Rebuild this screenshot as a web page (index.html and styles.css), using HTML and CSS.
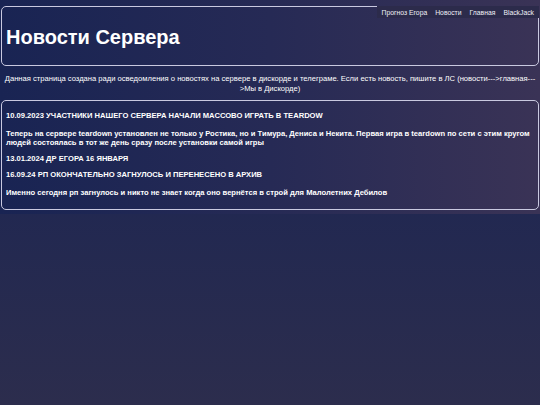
FILE: index.html
```html
<!DOCTYPE html>
<html lang="ru">
<head>
<meta charset="utf-8">
<title>Новости Сервера</title>
<link rel="stylesheet" href="styles.css">
</head>
<body>
<div class="wrap">
  <header class="header">
    <nav class="nav">
      <a href="#">Прогноз Егора</a>
      <a href="#">Новости</a>
      <a href="#">Главная</a>
      <a href="#">BlackJack</a>
    </nav>
    <h1 class="title">Новости Сервера</h1>
  </header>
  <p class="intro">Данная страница создана ради осведомления о новостях на сервере в дискорде и телеграме. Если есть новость, пишите в ЛС (новости---&gt;главная---&gt;Мы в Дискорде)</p>
  <section class="news">
    <h2 class="news-title">10.09.2023 УЧАСТНИКИ НАШЕГО СЕРВЕРА НАЧАЛИ МАССОВО ИГРАТЬ В TEARDOW</h2>
    <p class="news-text">Теперь на сервере teardown установлен не только у Ростика, но и Тимура, Дениса и Некита. Первая игра в teardown по сети с этим кругом людей состоялась в тот же день сразу после установки самой игры</p>
    <h2 class="news-title">13.01.2024 ДР ЕГОРА 16 ЯНВАРЯ</h2>
    <h2 class="news-title">16.09.24 РП ОКОНЧАТЕЛЬНО ЗАГНУЛОСЬ И ПЕРЕНЕСЕНО В АРХИВ</h2>
    <p class="news-text">Именно сегодня рп загнулось и никто не знает когда оно вернётся в строй для Малолетних Дебилов</p>
  </section>
</div>
</body>
</html>
```
FILE: styles.css
```css
html, body {
  margin: 0;
  padding: 0;
}
body {
  min-height: 405px;
  background: linear-gradient(180deg, #172251 0%, #1f2752 40%, #2c2d4d 100%);
  font-family: "Liberation Sans", Arial, sans-serif;
  color: #ffffff;
}
.wrap {
  background: linear-gradient(90deg, #192453 0%, #262a55 50%, #3a3356 100%);
  padding: 6px 1px 4px 1px;
}
.header {
  position: relative;
  height: 60px;
  border: 1px solid #c9c9e0;
  border-radius: 5px;
  box-sizing: border-box;
}
.nav {
  position: absolute;
  top: -1px;
  right: -1px;
  height: 12px;
  background: #2c2b4b;
  display: flex;
  padding: 0 1px 0 1px;
  align-items: center;
}
.nav a {
  color: #f0f0f8;
  text-decoration: none;
  font-size: 6.8px;
  padding: 0 4px;
}
.title {
  margin: 0;
  padding: 18px 0 0 4px;
  font-size: 20px;
  font-weight: bold;
  line-height: 24px;
}
.intro {
  margin: 8px 3px 6px 3px;
  font-size: 7.6px;
  line-height: 10px;
  text-align: center;
}
.news {
  border: 1px solid #c9c9e0;
  border-radius: 5px;
  padding: 4px 4px 5px 4px;
}
.news-title {
  margin: 6px 0;
  font-size: 7.6px;
  line-height: 10px;
  font-weight: bold;
}
.news-text {
  margin: 8px 0 7px 0;
  font-size: 7.6px;
  line-height: 9px;
  font-weight: bold;
}
```
